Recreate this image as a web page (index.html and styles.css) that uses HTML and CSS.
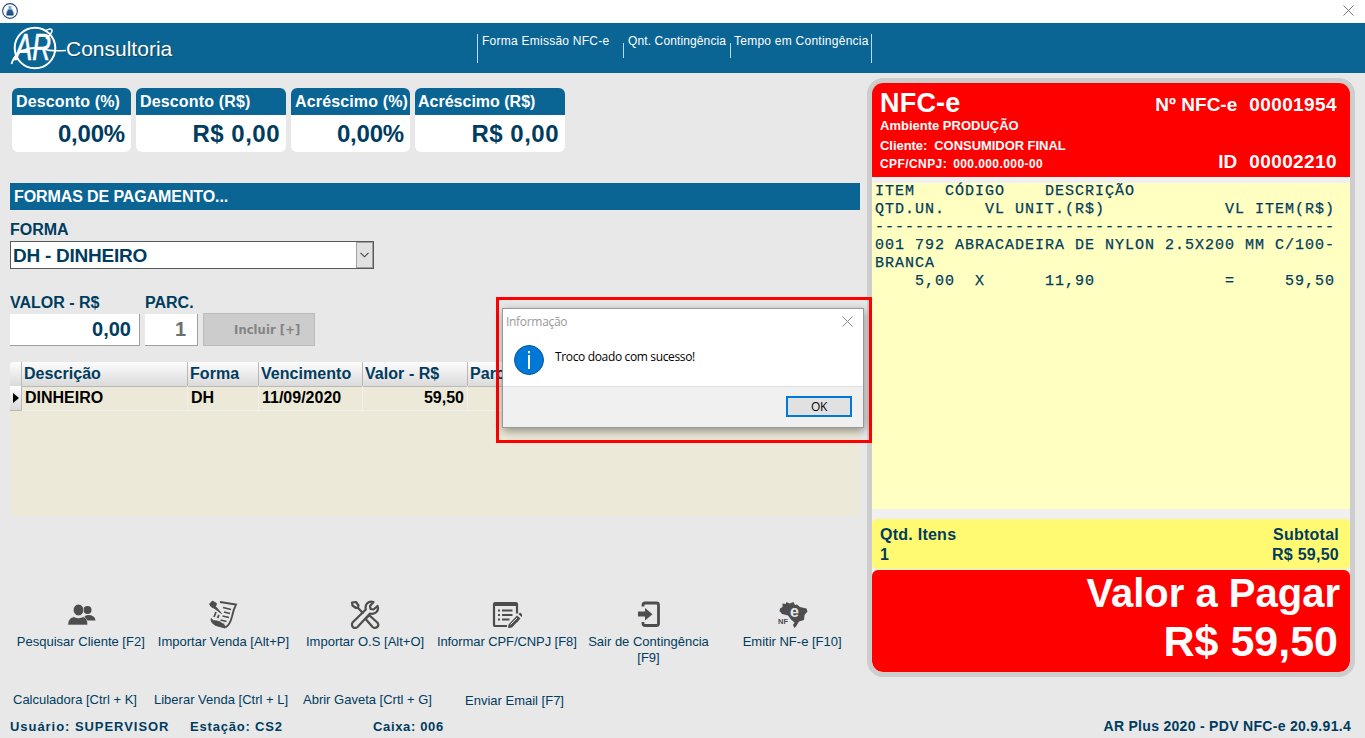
FILE: index.html
```html
<!DOCTYPE html>
<html lang="pt-BR">
<head>
    <meta charset="UTF-8">
    <meta name="viewport" content="width=device-width, initial-scale=1.0">
    <title>PDV NFC-e</title>
    <link rel="stylesheet" href="styles.css">
</head>
<body>
    <div class="titlebar">
        <svg class="app-icon" viewBox="0 0 18 18" width="18" height="18">
            <circle cx="9" cy="9" r="7.4" fill="#fff" stroke="#1f4a80" stroke-width="1.1"/>
            <path d="M7.5 4h3v3.5h-3z" fill="#7fa8d0"/>
            <path d="M6.5 7.5h5v2h1v2.5h-7V9.500h1z" fill="#245a94"/>
            <path d="M5.500 12h7v1.500h-7z" fill="#163f73"/>
        </svg>
        <svg class="app-close" viewBox="0 0 11 11" width="11" height="11">
            <path d="M.5.5l10 10M10.500.5l-10 10" stroke="#777" fill="none"/>
        </svg>
    </div>

    <header class="header">
        <div class="brand">
            <svg class="brand-mark" viewBox="0 0 56 48" width="56" height="48">
                <circle cx="25" cy="25" r="20.300" fill="none" stroke="#fff" stroke-width="2"/>
                <text class="brand-letters" x="5" y="37" textLength="36" lengthAdjust="spacingAndGlyphs">AR</text>
                <path d="M1.500 41q2-7 7-11 8-5 17-5" fill="none" stroke="#fff" stroke-width="1.800"/>
                <path d="M34 26q6 2.500 22 1.500M35 8q6-3.500 7-1 .5 3-6 9" fill="none" stroke="#fff" stroke-width="1.600"/>
            </svg>
            <span class="brand-name">Consultoria</span>
        </div>
        <div class="header-info">
            <span class="info-forma">Forma Emissão NFC-e</span>
            <span class="info-qnt">Qnt. Contingência</span>
            <span class="info-tempo">Tempo em Contingência</span>
        </div>
    </header>

    <main class="main">
        <section class="left">
            <div class="cards">
                <div class="card small">
                    <div class="card-title">Desconto (%)</div>
                    <div class="card-value">0,00%</div>
                </div>
                <div class="card">
                    <div class="card-title">Desconto (R$)</div>
                    <div class="card-value money">R$ 0,00</div>
                </div>
                <div class="card small">
                    <div class="card-title">Acréscimo (%)</div>
                    <div class="card-value">0,00%</div>
                </div>
                <div class="card">
                    <div class="card-title">Acréscimo (R$)</div>
                    <div class="card-value money">R$ 0,00</div>
                </div>
            </div>

            <div class="section-title">FORMAS DE PAGAMENTO...</div>

            <div class="field-label label-forma">FORMA</div>
            <div class="select">
                <span class="select-text">DH - DINHEIRO</span>
                <span class="select-arrow">
                    <svg viewBox="0 0 9 6" width="9" height="6"><path d="M.5.8l4 4 4-4" fill="none" stroke="#444" stroke-width="1.100"/></svg>
                </span>
            </div>

            <div class="pay-row">
                <div class="pay-valor">
                    <div class="field-label">VALOR - R$</div>
                    <div class="input">0,00</div>
                </div>
                <div class="pay-parc">
                    <div class="field-label">PARC.</div>
                    <div class="input disabled">1</div>
                </div>
                <div class="btn-incluir">Incluir [+]</div>
            </div>

            <div class="grid">
                <div class="grid-row grid-head">
                    <span></span>
                    <span>Descrição</span>
                    <span>Forma</span>
                    <span>Vencimento</span>
                    <span>Valor - R$</span>
                    <span>Parc.</span>
                </div>
                <div class="grid-row grid-line">
                    <span class="marker"><svg viewBox="0 0 6 10" width="6" height="10"><path d="M0 0l6 5-6 5z" fill="#000"/></svg></span>
                    <span>DINHEIRO</span>
                    <span>DH</span>
                    <span>11/09/2020</span>
                    <span class="num">59,50</span>
                    <span></span>
                </div>
            </div>

            <nav class="toolbar">
                <div class="tool">
                    <svg viewBox="0 0 30 30" width="30" height="30" fill="#4d4d4d">
                        <circle cx="21.500" cy="10" r="4"/>
                        <path d="M18 20.500q-1-5 4-5.500 7 0 7.500 5.500z"/>
                        <g stroke="#e8e8e8" stroke-width=".6">
                            <ellipse cx="12.500" cy="10" rx="5.200" ry="5.800"/>
                            <path d="M1.800 25q0-7 6-8.300 4.700 2.600 9.400 0 4.500 1.300 4.500 8.300z"/>
                        </g>
                    </svg>
                    <span>Pesquisar Cliente [F2]</span>
                </div>
                <div class="tool importar">
                    <svg viewBox="0 0 30 30" width="30" height="30" fill="none" stroke="#4d4d4d" stroke-width="1.800">
                        <path d="M12 2l16 2.500q-2.500 5-4 12-2 8-6 10.500-3-.5-2.500-3.500"/>
                        <path d="M3 18.500q2 3 6 2.500 5 1 6 3.500-.5 3 2 3.500l-9-2.500q-5-2-5-7z" fill="#4d4d4d" stroke-width="1"/>
                        <path d="M1.500 4l3-3 4 2.500-1 3 6 7-7.500-5.500-2.500-1z" fill="#4d4d4d" stroke-width="1"/>
                        <path d="M15 7.500l8 2M16 12l6 1.500M14.500 16l6.500 1.500M12.500 20l6 1.500M8 12l-2 5M11 15l-1.500 3" stroke-width="1.700"/>
                    </svg>
                    <span>Importar Venda [Alt+P]</span>
                </div>
                <div class="tool importar">
                    <svg viewBox="0 0 30 30" width="30" height="30" fill="none" stroke="#4d4d4d" stroke-width="2.200" stroke-linejoin="round">
                        <path d="M2 2.500l4-.5 2.500 3.500-.5 2-2 .5-3.500-2.500zM7.500 7.500l6 6"/>
                        <path d="M16.500 18l2.800-2.700 8 7.200q2 2.500 0 4.500-2.500 1.800-4.700 0l-7-8z"/>
                        <path d="M27.500 6l-4 3.500-3-.5-.5-3L23.500 2q-4-1.300-6.500 1.500-2 2.500-1.200 6L2.500 22.500q-1.300 3 .5 4.700 2.500 1.500 4.500-.2L20 13.500q4 1 6.500-1.500 2.300-2.500 1-6z"/>
                    </svg>
                    <span>Importar O.S [Alt+O]</span>
                </div>
                <div class="tool informar">
                    <svg viewBox="0 0 30 30" width="30" height="30" fill="none" stroke="#4d4d4d" stroke-width="2.200">
                        <path d="M15 26H3.500q-1.500 0-1.500-1.500V5H25v8.500M25 20v2"/>
                        <path d="M1 4q0-2 2-2h21q2 0 2 2v2H1z" fill="#4d4d4d" stroke="none"/>
                        <path d="M6 10.500h2M10 10.500h10.500M6 15h2M10 15h10.500M6 19.500h2M10 19.500h7.500" stroke-width="1.900"/>
                        <path d="M16.500 24.500l8.500-9 3.500 3-8.500 9-4 .5zM26.500 14l1.500-1.500 3 2.500-1.500 2z" fill="#4d4d4d" stroke="none"/>
                        <path d="M18.500 24.500l6.500-6.500" stroke="#e8e8e8" stroke-width="1"/>
                    </svg>
                    <span>Informar CPF/CNPJ [F8]</span>
                </div>
                <div class="tool sair">
                    <svg viewBox="0 0 30 30" width="30" height="30" fill="none" stroke="#4d4d4d" stroke-width="2.800">
                        <path d="M9 6.500V5q0-2 2-2h11.500q2 0 2 2v18.500q0 2-2 2H11q-2 0-2-2V22"/>
                        <path d="M4 11.500h7V8l7.500 6.200-7.500 6.300v-4H4z" fill="#4d4d4d" stroke="none"/>
                    </svg>
                    <span>Sair de Contingência<br>[F9]</span>
                </div>
                <div class="tool emitir">
                    <svg viewBox="0 0 30 30" width="30" height="30">
                        <path d="M2 8.500l2.500-1.500V3.500l3 .5 1-2 3 1.500 4-1.500 1.500 3 2-.5 3 2.500 6.500 1.500 1 3-3 3.500-.5 5-5 1.500-3 5-1.500 1.500-1.500-3 1.500-2.500-3.500-3-3-4-6-1.500-2.500-3z" fill="#4d4d4d"/>
                        <text x="12" y="16.500" class="nfe-e">e</text>
                        <text x="0" y="23.500" class="nfe-nf">NF</text>
                    </svg>
                    <span>Emitir NF-e [F10]</span>
                </div>
            </nav>

            <div class="shortcuts">
                <span>Calculadora [Ctrl + K]</span>
                <span>Liberar Venda [Ctrl + L]</span>
                <span>Abrir Gaveta [Crtl + G]</span>
                <span class="email">Enviar Email [F7]</span>
            </div>
        </section>

        <aside class="receipt">
            <div class="nfce">
                <div class="nfce-left">
                    <h1>NFC-e</h1>
                    <div class="ambiente">Ambiente PRODUÇÃO</div>
                    <div class="cliente"><span>Cliente:</span><span>CONSUMIDOR FINAL</span></div>
                    <div class="cpf"><span>CPF/CNPJ:</span><span>000.000.000-00</span></div>
                </div>
                <div class="nfce-right">
                    <div><span>Nº NFC-e</span><b>00001954</b></div>
                    <div><span>ID</span><b>00002210</b></div>
                </div>
            </div>
            <pre class="items">ITEM   CÓDIGO    DESCRIÇÃO
QTD.UN.    VL UNIT.(R$)            VL ITEM(R$)
----------------------------------------------
001 792 ABRACADEIRA DE NYLON 2.5X200 MM C/100-
BRANCA
    5,00  X      11,90             =     59,50</pre>
            <div class="subtotal">
                <div>Qtd. Itens<br>1</div>
                <div class="right">Subtotal<br>R$ 59,50</div>
            </div>
            <div class="total">
                <div class="total-label">Valor a Pagar</div>
                <div class="total-value">R$ 59,50</div>
            </div>
        </aside>
    </main>

    <footer class="status">
        <span class="st-user">Usuário: SUPERVISOR</span>
        <span class="st-station">Estação: CS2</span>
        <span class="st-caixa">Caixa: 006</span>
        <span class="st-version">AR Plus 2020 - PDV NFC-e 20.9.91.4</span>
    </footer>

    <div class="highlight">
        <div class="dialog">
            <div class="dialog-title">
                <span>Informação</span>
                <svg viewBox="0 0 11 11" width="11" height="11"><path d="M.5.5l10 10M10.500.5l-10 10" stroke="#888" fill="none"/></svg>
            </div>
            <div class="dialog-body">
                <svg viewBox="0 0 30 30" width="30" height="30">
                    <circle cx="15" cy="15" r="14.500" fill="#0078d7" stroke="#0a5698"/>
                    <path d="M15 6v2.300M15 10v14" stroke="#fff" stroke-width="2"/>
                </svg>
                <span>Troco doado com sucesso!</span>
            </div>
            <div class="dialog-footer">
                <div class="btn-ok">OK</div>
            </div>
        </div>
    </div>
</body>
</html>
```
FILE: styles.css
```css
* {
    box-sizing: border-box;
}

body {
    margin: 0;
    width: 1365px;
    height: 738px;
    overflow: hidden;
    background: #e8e8e8;
    color: #003c5e;
    font-family: "Liberation Sans", Arial, sans-serif;
    font-size: 13px;
    position: relative;
}

/* window bar */
.titlebar {
    height: 23px;
    background: #fff;
    display: flex;
    justify-content: space-between;
    padding: 2px 11px 0 1px;
}

.app-close {
    margin-top: 3px;
}

/* header */
.header {
    height: 50px;
    background: #0a6594;
    color: #fff;
    display: flex;
}

.brand {
    width: 477px;
    display: flex;
    padding-left: 10px;
}

.brand-letters {
    font-style: italic;
    font-size: 37px;
    fill: #fff;
    stroke: #fff;
    stroke-width: 0.6;
}

.brand-name {
    font-size: 21px;
    line-height: 51px;
    text-shadow: 1px 1px 1px #17435e;
}

.header-info {
    display: flex;
    align-items: flex-start;
    font-size: 12px;
    line-height: 14px;
    letter-spacing: 0.25px;
    white-space: nowrap;
    padding-top: 11px;
}

.info-forma {
    width: 146px;
    height: 29px;
    border-left: 1px solid #b5dcf0;
    padding-left: 4px;
}

.info-qnt {
    width: 107px;
    height: 24px;
    padding-left: 5px;
    background: linear-gradient(#b5dcf0, #b5dcf0) 0 9px / 1px 15px no-repeat;
    letter-spacing: 0.12px;
}

.info-tempo {
    width: 142px;
    height: 29px;
    padding-left: 4px;
    background: linear-gradient(#b5dcf0, #b5dcf0) 0 9px / 1px 15px no-repeat;
    border-right: 1px solid #b5dcf0;
}

/* layout */
.main {
    display: flex;
    height: 640px;
}

.left {
    width: 860px;
    padding: 15px 0 0 10px;
}

/* discount cards */
.cards {
    display: flex;
    gap: 5px;
    padding-left: 2px;
    height: 64px;
    font-weight: bold;
}

.card {
    width: 150px;
    background: #fff;
    border-radius: 6px;
    overflow: hidden;
}

.card.small {
    width: 119px;
}

.card-title {
    height: 27px;
    line-height: 27px;
    padding-left: 4px;
    background: #0a6594;
    color: #fff;
    font-size: 16px;
    letter-spacing: 0.15px;
    white-space: nowrap;
}

.card:last-child .card-title {
    padding-left: 3px;
    letter-spacing: 0;
}

.card-value {
    font-size: 24px;
    line-height: 37px;
    text-align: right;
    padding-right: 6px;
    letter-spacing: -0.2px;
}

.card-value.money {
    letter-spacing: 0.5px;
}

/* payment form */
.section-title {
    margin-top: 31px;
    height: 27px;
    line-height: 27px;
    padding-left: 4px;
    background: #0a6594;
    color: #fff;
    font-size: 16px;
    font-weight: bold;
    letter-spacing: -0.1px;
}

.field-label {
    font-size: 16px;
    font-weight: bold;
    line-height: 18px;
}

.label-forma {
    margin-top: 11px;
}

.select {
    width: 364px;
    height: 28px;
    margin-top: 2px;
    border: 1px solid #58595b;
    background: #fff;
    display: flex;
    justify-content: space-between;
    font-size: 19px;
    font-weight: bold;
    line-height: 27px;
    padding-left: 2px;
    letter-spacing: -0.25px;
}

.select-arrow {
    width: 17px;
    border: 1px solid #a0a0a0;
    background: #e1e1e1;
    display: flex;
    align-items: center;
    justify-content: center;
}

.pay-row {
    display: flex;
    align-items: flex-end;
    gap: 5px;
    margin-top: 24px;
    height: 53px;
}

.pay-valor {
    width: 130px;
}

.pay-parc {
    width: 53px;
}

.input {
    height: 32px;
    margin-top: 2px;
    background: #fff;
    border-right: 1px solid #a0a0a0;
    border-bottom: 1px solid #a0a0a0;
    font-size: 20px;
    font-weight: bold;
    line-height: 30px;
    text-align: right;
    padding-right: 8px;
}

.input.disabled {
    color: #6d6d6d;
    padding-right: 11px;
}

.btn-incluir {
    width: 112px;
    height: 33px;
    border: 1px solid #bcbcbc;
    background: #ccc;
    color: #838383;
    font-family: "DejaVu Sans", sans-serif;
    font-size: 11.5px;
    font-weight: bold;
    line-height: 33px;
    padding-left: 30px;
    white-space: nowrap;
    letter-spacing: 0.1px;
}

/* payments grid */
.grid {
    margin-top: 16px;
    height: 154px;
    background: #ece9d8;
    border-radius: 4px 0 4px 4px;
    overflow: hidden;
    font-size: 16px;
    font-weight: bold;
}

.grid-row {
    display: grid;
    grid-template-columns: 12px 166px 71px 104px 105px 1fr;
    height: 24px;
    line-height: 24px;
}

.grid-row span {
    border-right: 1px solid #f0f0ee;
    border-bottom: 1px solid #f0f0ee;
    padding-left: 3px;
    white-space: nowrap;
}

.grid-head {
    background: linear-gradient(#fdfdfd, #dadada);
}

.grid-head span {
    border-right-color: #b9b9b9;
    border-bottom-color: #b9b9b9;
    padding-left: 2px;
    letter-spacing: 0.05px;
}

.grid-line {
    color: #000;
}

.grid-line .num {
    text-align: right;
    padding-right: 3px;
}

.grid-line .marker {
    display: flex;
    align-items: center;
    background: linear-gradient(#fdfdfd, #dadada);
    border-color: #b9b9b9;
}

/* bottom actions */
.toolbar {
    display: flex;
    margin-top: 84px;
    height: 87px;
}

.tool {
    width: 142px;
    display: flex;
    flex-direction: column;
    align-items: center;
    text-align: center;
    line-height: 16px;
    white-space: nowrap;
}

.tool svg {
    margin-bottom: 4px;
}

.importar {
    padding-left: 2px;
}

.informar {
    padding-left: 2px;
    letter-spacing: -0.08px;
}

.sair {
    padding-left: 2px;
}

.emitir {
    padding-left: 7px;
}

.emitir span {
    margin-right: 1px;
}

.nfe-e {
    font-size: 16px;
    font-weight: bold;
    fill: #e8e8e8;
}

.nfe-nf {
    font-size: 7.5px;
    font-weight: bold;
    fill: #4d4d4d;
}

.shortcuts {
    display: grid;
    grid-template-columns: 141px 149px 162px auto;
    padding: 5px 0 0 3px;
    white-space: nowrap;
}

.email {
    padding-top: 1px;
}

/* receipt panel */
.receipt {
    width: 488px;
    height: 599px;
    margin: 5px 0 0 7px;
    border: 5px solid #cdcdcd;
    border-radius: 16px;
    background: #f0f0f0;
    overflow: hidden;
}

.nfce {
    height: 94px;
    background: #f00;
    color: #fff;
    font-weight: bold;
    display: flex;
    justify-content: space-between;
    padding: 0 13px 0 8px;
}

.nfce-left h1 {
    font-size: 27px;
    line-height: 31px;
    margin: 5px 0 0;
    letter-spacing: 0.2px;
}

.ambiente {
    line-height: 14px;
}

.cliente {
    display: flex;
    gap: 7px;
    margin-top: 5px;
    line-height: 15px;
    letter-spacing: -0.05px;
}

.cpf {
    display: flex;
    gap: 6px;
    margin-top: 3px;
    line-height: 16px;
    font-size: 12px;
    letter-spacing: 0.42px;
}

.nfce-right {
    font-size: 19px;
    display: flex;
    flex-direction: column;
    justify-content: space-between;
    align-items: flex-end;
    padding: 11px 0 4px;
    line-height: 22px;
}

.nfce-right b {
    margin-left: 12px;
    letter-spacing: 0.4px;
}

.items {
    height: 326px;
    margin: 6px 0 10px;
    padding-left: 3px;
    background: #ffffc1;
    font-family: "Courier New", "Liberation Mono", monospace;
    font-size: 15px;
    line-height: 18px;
    letter-spacing: 1px;
    -webkit-text-stroke: 0.25px #003c5e;
}

.subtotal {
    height: 50px;
    background: #fffa72;
    border-radius: 5px;
    display: flex;
    justify-content: space-between;
    padding: 6px 11px 0 8px;
    font-size: 16px;
    font-weight: bold;
    line-height: 20px;
    letter-spacing: 0.25px;
}

.right {
    text-align: right;
}

.total {
    height: 102px;
    margin-top: 1px;
    background: #f00;
    border-radius: 6px 6px 11px 11px;
    color: #fff;
    font-weight: bold;
    text-align: right;
    padding-right: 10px;
}

.total-label {
    font-size: 40px;
    line-height: 46px;
}

.total-value {
    font-size: 43px;
    line-height: 50px;
    padding-right: 2px;
}

/* status line */
.status {
    display: flex;
    padding-left: 10px;
    font-weight: bold;
    line-height: 27px;
    letter-spacing: 0.95px;
    white-space: nowrap;
}

.st-user {
    width: 180px;
}

.st-station {
    width: 183px;
    letter-spacing: 0.8px;
}

.st-caixa {
    letter-spacing: 0.65px;
}

.st-version {
    margin-left: auto;
    margin-right: 14px;
    font-size: 14px;
    letter-spacing: 0.3px;
}

/* message dialog */
.highlight {
    position: absolute;
    left: 496px;
    top: 297px;
    width: 376px;
    height: 146px;
    border: 3px solid #f00;
    padding: 8px 0 0 3px;
}

.dialog {
    width: 362px;
    height: 120px;
    border: 1px solid #999;
    background: #fff;
    color: #000;
    box-shadow: 1px 3px 9px rgba(0, 0, 0, 0.4);
    font-family: "Open Sans", "Noto Sans", sans-serif;
    font-size: 12px;
    letter-spacing: -0.35px;
}

.dialog-title {
    display: flex;
    justify-content: space-between;
    align-items: center;
    height: 24px;
    padding: 0 10px 0 3px;
    color: #999;
    letter-spacing: -0.3px;
}

.dialog-body {
    display: flex;
    height: 53px;
    padding: 12px 0 0 11px;
    gap: 11px;
    line-height: 23px;
}

.dialog-footer {
    height: 41px;
    background: #f0f0f0;
    border-top: 1px solid #dfdfdf;
    display: flex;
    justify-content: flex-end;
    padding: 9px 11px 0 0;
}

.btn-ok {
    width: 66px;
    height: 21px;
    border: 2px solid #0078d7;
    background: #e1e1e1;
    line-height: 18px;
    text-align: center;
}
```
